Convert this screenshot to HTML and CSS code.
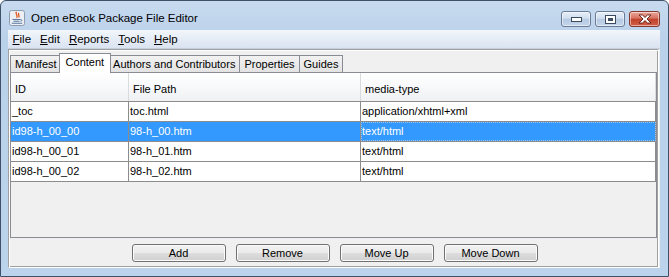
FILE: index.html
```html
<!DOCTYPE html>
<html lang="en">
<head>
    <meta charset="UTF-8" />
    <title>Open eBook Package File Editor</title>
    <link rel="stylesheet" href="styles.css">
</head>
<body>

<div class="window">
    <div class="titlebar">
        <svg class="app-icon" width="16" height="16" viewBox="0 0 16 16">
            <rect x="0.5" y="0.5" width="15" height="15" rx="2" fill="#eceff4" stroke="#8d9bb0"/>
            <path d="M7.5 1.8c-2 2.2 2.2 3 .2 6.2M9.8 3c-1.2 1.6 1 2.2 0 4.4" stroke="#e0561c" stroke-width="1.3" fill="none"/>
            <path d="M3.5 9.5h8M4.5 11.2h6M2.8 13.2h10.4" stroke="#58789e" stroke-width="1.1"/>
            <path d="M11.5 9.5c1.8 0 1.8 1.8 0 1.8" stroke="#58789e" fill="none"/>
        </svg>
        <span class="title">Open eBook Package File Editor</span>
        <div class="caption-buttons">
            <div class="cap-btn">
                <svg width="11" height="5" viewBox="0 0 11 5"><rect x="0.5" y="0.5" width="10" height="4" fill="#fff" stroke="#3c4a5e"/></svg>
            </div>
            <div class="cap-btn">
                <svg width="11" height="9" viewBox="0 0 11 9"><rect x="0.5" y="0.5" width="10" height="8" fill="#fff" stroke="#3c4a5e"/><rect x="3.5" y="3.5" width="4" height="2" fill="#44546a" stroke="#3c4a5e"/></svg>
            </div>
            <div class="cap-btn close">
                <svg width="14" height="10" viewBox="0 0 14 10"><path d="M1 1h3.5L7 3.4 9.5 1H13L9 5l4 4H9.5L7 6.6 4.5 9H1l4-4z" fill="#fff" stroke="#5e1d14" stroke-width="0.9"/></svg>
            </div>
        </div>
    </div>

    <div class="client">
        <div class="menubar">
            <span class="menu-item"><u>F</u>ile</span>
            <span class="menu-item"><u>E</u>dit</span>
            <span class="menu-item"><u>R</u>eports</span>
            <span class="menu-item"><u>T</u>ools</span>
            <span class="menu-item"><u>H</u>elp</span>
        </div>

        <div class="content">
            <div class="tabs">
                <div class="tab">Manifest</div>
                <div class="tab selected">Content</div>
                <div class="tab">Authors and Contributors</div>
                <div class="tab">Properties</div>
                <div class="tab">Guides</div>
            </div>

            <div class="tab-body">
                <div class="row header">
                    <div class="cell">ID</div>
                    <div class="cell">File Path</div>
                    <div class="cell">media-type</div>
                </div>
                <div class="row">
                    <div class="cell">_toc</div>
                    <div class="cell">toc.html</div>
                    <div class="cell">application/xhtml+xml</div>
                </div>
                <div class="row selected">
                    <div class="cell">id98-h_00_00</div>
                    <div class="cell">98-h_00.htm</div>
                    <div class="cell focused">text/html</div>
                </div>
                <div class="row">
                    <div class="cell">id98-h_00_01</div>
                    <div class="cell">98-h_01.htm</div>
                    <div class="cell">text/html</div>
                </div>
                <div class="row">
                    <div class="cell">id98-h_00_02</div>
                    <div class="cell">98-h_02.htm</div>
                    <div class="cell">text/html</div>
                </div>
            </div>

            <div class="buttons">
                <button class="btn">Add</button>
                <button class="btn">Remove</button>
                <button class="btn">Move Up</button>
                <button class="btn">Move Down</button>
            </div>
        </div>
    </div>
</div>

</body>
</html>
```

FILE: styles.css
```css
* {
    box-sizing: border-box;
    margin: 0;
    padding: 0;
}
body {
    width: 669px;
    height: 277px;
    overflow: hidden;
    font-family: 'Liberation Sans', Arial, sans-serif;
    font-size: 11px;
    color: #000;
    background: #fff;
}

/* window frame */
.window {
    width: 669px;
    height: 277px;
    border: 1px solid #3f5168;
    border-radius: 6px 6px 0 0;
    background: linear-gradient(#c7daef, #bad1ea 40px, #bcd3ec);
    padding: 0 8px 8px 7px;
    display: flex;
    flex-direction: column;
}
.titlebar {
    height: 29px;
    flex: none;
    display: flex;
    align-items: flex-start;
}
.app-icon {
    margin: 9px 0 0 1px;
}
.title {
    margin: 10px 0 0 6px;
    font-size: 11.5px;
    line-height: 14px;
    color: #000;
}
.caption-buttons {
    margin: 10px 0 0 auto;
    display: flex;
    gap: 4px;
}
.cap-btn {
    width: 30px;
    height: 16px;
    border: 1px solid #6a7c95;
    border-radius: 3px;
    background: linear-gradient(#e6eef8 0, #d2dfef 45%, #b5c9e2 50%, #c3d5ea 100%);
    box-shadow: inset 0 0 0 1px rgba(255, 255, 255, 0.5);
    display: flex;
    align-items: center;
    justify-content: center;
}
.cap-btn.close {
    width: 31px;
    border-color: #84372c;
    background: linear-gradient(#e9a698 0, #d7715f 45%, #c1412c 50%, #cf5e44 100%);
}

/* client area */
.client {
    flex: 1;
    background: #f0f0f0;
    display: flex;
    flex-direction: column;
}
.menubar {
    height: 19px;
    flex: none;
    display: flex;
    align-items: center;
    background: linear-gradient(#f2f6fb, #dae3f1);
    border-bottom: 1px solid #c6cfdd;
    font-size: 11.5px;
}
.menu-item {
    padding: 0 4.5px;
    line-height: 16px;
}

.content {
    flex: 1;
    width: 651px;
    border: 1px solid;
    border-color: #a0a0a0 #fff #fff #a0a0a0;
    box-shadow: inset 1px 1px #fff, inset -1px -1px #a0a0a0;
    padding: 1px;
    display: flex;
    flex-direction: column;
}

/* tabs */
.tabs {
    height: 21px;
    flex: none;
    display: flex;
    align-items: flex-end;
}
.tab {
    height: 17px;
    line-height: 16px;
    padding: 0 4px;
    border: 1px solid #898c95;
    border-bottom: none;
    margin-right: -1px;
    background: linear-gradient(#f2f2f2, #e3e3e3);
    white-space: nowrap;
}
.tab.selected {
    position: relative;
    z-index: 1;
    height: 20px;
    line-height: 17px;
    margin: 0 -3px -1px -2px;
    padding: 0 6px 2px;
    background: #fff;
}

.tab-body {
    height: 166px;
    flex: none;
    width: 647px;
    border: 1px solid #898c95;
    background: #f0f0f0;
}
.row {
    display: grid;
    grid-template-columns: 118px 232px 295px;
    background: #fff;
    border-bottom: 1px solid #8c8c8c;
}
.cell {
    height: 19px;
    line-height: 19px;
    padding: 0 1px;
    border-right: 1px solid #8c8c8c;
    white-space: nowrap;
    overflow: hidden;
}
.row.header {
    background: linear-gradient(#ffffff, #f7f8fa 55%, #eff0f2);
}
.row.header .cell {
    height: 28px;
    line-height: 13px;
    padding: 10px 4px 5px;
    border-right-color: #dadbdd;
}
.row.selected {
    background: #3399ff;
    color: #fff;
}
.cell.focused {
    outline: 1px dotted #9cc6ee;
    outline-offset: -1px;
}

/* buttons */
.buttons {
    flex: 1;
    display: flex;
    justify-content: center;
    gap: 10px;
    padding-top: 6px;
    padding-left: 2px;
}
.btn {
    width: 94px;
    height: 18px;
    border: 1px solid #707070;
    border-radius: 3px;
    background: linear-gradient(#f2f2f2 0, #ebebeb 48%, #dddddd 52%, #cfcfcf 100%);
    box-shadow: inset 0 0 0 1px #fbfbfb;
    font-family: 'Liberation Sans', Arial, sans-serif;
    font-size: 11px;
    color: #000;
}
```
